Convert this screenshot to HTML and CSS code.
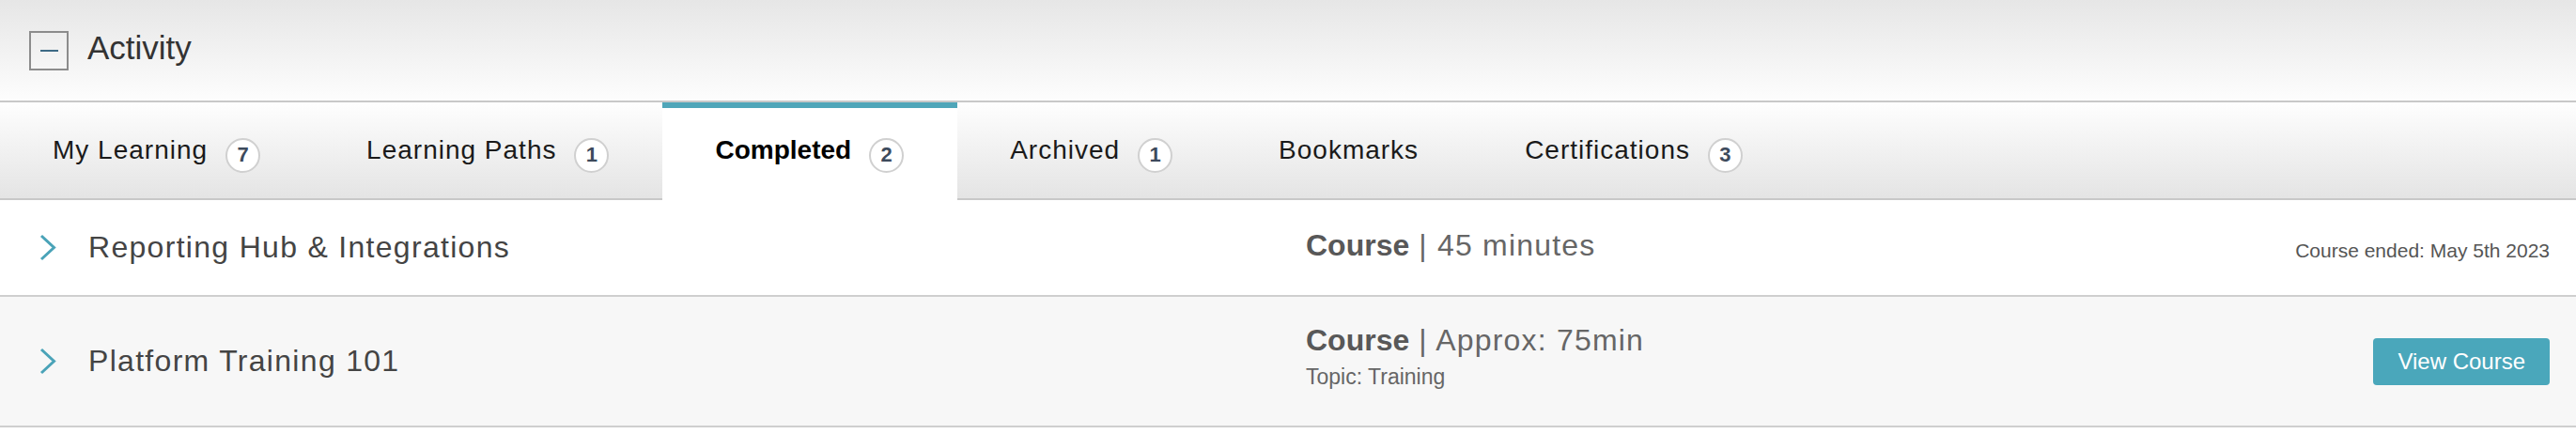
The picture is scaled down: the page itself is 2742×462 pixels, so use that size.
FILE: index.html
```html
<!DOCTYPE html>
<html lang="en">
<head>
<meta charset="utf-8">
<title>Activity</title>
<link rel="stylesheet" href="styles.css">
</head>
<body>
<section class="panel">
  <header class="panel-header">
    <button class="toggle" aria-label="Collapse"><span class="minus"></span></button>
    <h2 class="panel-title">Activity</h2>
  </header>
  <nav class="tabs">
    <div class="tab"><span class="tab-label">My Learning</span><span class="badge">7</span></div>
    <div class="tab"><span class="tab-label">Learning Paths</span><span class="badge">1</span></div>
    <div class="tab active"><span class="tab-label">Completed</span><span class="badge">2</span></div>
    <div class="tab"><span class="tab-label">Archived</span><span class="badge">1</span></div>
    <div class="tab"><span class="tab-label">Bookmarks</span></div>
    <div class="tab"><span class="tab-label">Certifications</span><span class="badge">3</span></div>
  </nav>
  <div class="list">
    <div class="row">
      <svg class="chev" width="18" height="29" viewBox="0 0 18 29"><polyline points="2,2 15.5,14.5 2,27" fill="none" stroke="#4aa3b8" stroke-width="3"/></svg>
      <div class="title">Reporting Hub &amp; Integrations</div>
      <div class="meta"><div class="meta-main one"><b>Course</b> | 45 minutes</div></div>
      <div class="right date">Course ended: May 5th 2023</div>
    </div>
    <div class="row alt">
      <svg class="chev" width="18" height="29" viewBox="0 0 18 29"><polyline points="2,2 15.5,14.5 2,27" fill="none" stroke="#4aa3b8" stroke-width="3"/></svg>
      <div class="title">Platform Training 101</div>
      <div class="meta"><div class="meta-main"><b>Course</b> | Approx: 75min</div><div class="meta-sub">Topic: Training</div></div>
      <div class="right"><button class="btn">View Course</button></div>
    </div>
  </div>
</section>
</body>
</html>
```
FILE: styles.css
```css
* { box-sizing: border-box; }
html, body { margin: 0; padding: 0; background: #fff; }
body { font-family: "Liberation Sans", Arial, sans-serif; color: #333; }

.panel-header {
  height: 109px;
  display: flex;
  align-items: center;
  padding-left: 31px;
  background: linear-gradient(#e6e6e6, #fdfdfd);
  border-bottom: 2px solid #c8c8c8;
}
.toggle {
  width: 42px;
  height: 42px;
  border: 2px solid #8c8c8c;
  background: transparent;
  display: flex;
  align-items: center;
  justify-content: center;
  padding: 0;
  margin: 0 20px 0 0;
}
.minus { display: block; width: 19px; height: 2px; background: #3d6a85; }
.panel-title {
  margin: 0 0 6px 0;
  font-weight: normal;
  font-size: 35px;
  color: #333;
}

.tabs {
  display: flex;
  height: 104px;
  background: linear-gradient(#fefefe, #e4e4e4);
  border-bottom: 2px solid #c8c8c8;
}
.tab {
  display: flex;
  align-items: center;
  padding: 0 57px 0 56px;
  font-size: 28px;
  letter-spacing: 1px;
  color: #1a1a1a;
}
.tab.active {
  background: #fff;
  border-top: 6px solid #4fa6b9;
  margin-bottom: -2px;
  padding-bottom: 8px;
  font-weight: bold;
  letter-spacing: 0;
  color: #000;
}
.badge {
  margin-left: 19px;
  width: 37px;
  height: 37px;
  border-radius: 50%;
  border: 2px solid #d0d0d0;
  background: #fff;
  display: flex;
  align-items: center;
  justify-content: center;
  font-family: "Liberation Sans", Arial, sans-serif;
  font-weight: bold;
  font-size: 22px;
  letter-spacing: 0;
  color: #3d4a5c;
  margin-top: 10px;
}

.row {
  display: grid;
  grid-template-columns: 52px 1296px 1fr auto;
  align-items: center;
  height: 103px;
  padding: 0 28px 0 42px;
  border-bottom: 2px solid #cfcfcf;
  background: #fff;
}
.row.alt { height: 139px; background: #f7f7f7; }
.chev { display: block; }
.title {
  font-size: 32px;
  letter-spacing: 1.3px;
  color: #444;
}
.meta { color: #666; }
.meta-main { font-size: 32px; letter-spacing: 1.2px; line-height: 36px; }
.meta-main.one { margin-bottom: 5px; }
.meta-main b { color: #585858; letter-spacing: 0; }
.meta-sub { font-size: 23px; line-height: 26px; margin-top: 8px; margin-bottom: 11px; }
.right { justify-self: end; }
.date { font-size: 21px; color: #555; padding-top: 6px; }
.btn {
  height: 50px;
  padding: 0 26px;
  border: none;
  border-radius: 4px;
  background: #4aa7bb;
  color: #fff;
  font-family: "Liberation Sans", Arial, sans-serif;
  font-size: 24px;
}
```
